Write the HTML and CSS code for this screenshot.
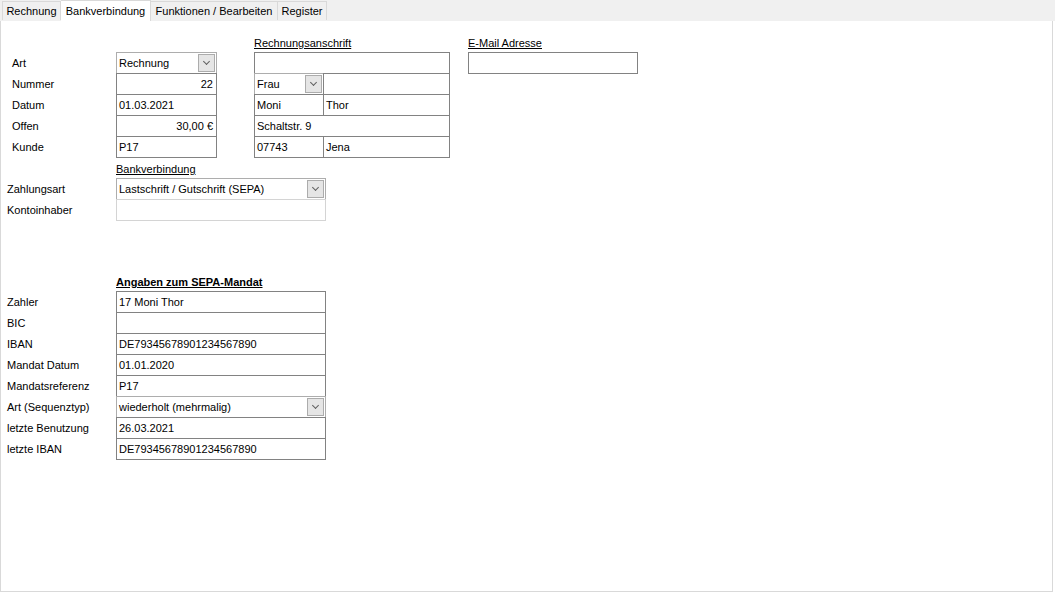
FILE: index.html
```html
<!DOCTYPE html>
<html lang="de">
<head>
<meta charset="UTF-8">
<title>Bankverbindung</title>
<link rel="stylesheet" href="styles.css">
</head>
<body>

<div class="tabs">
    <div class="tab t-invoice">Rechnung</div>
    <div class="tab active t-bank">Bankverbindung</div>
    <div class="tab t-func">Funktionen / Bearbeiten</div>
    <div class="tab t-reg">Register</div>
</div>

<div class="panel">
    <div class="top">
        <div class="col-main">
            <div class="head"></div>
            <div class="row"><span class="label indent">Art</span><div class="field select w-main">Rechnung<span class="drop"></span></div></div>
            <div class="row"><span class="label indent">Nummer</span><div class="field w-main right">22</div></div>
            <div class="row"><span class="label indent">Datum</span><div class="field w-main">01.03.2021</div></div>
            <div class="row"><span class="label indent">Offen</span><div class="field w-main right">30,00 €</div></div>
            <div class="row"><span class="label indent">Kunde</span><div class="field w-main">P17</div></div>
        </div>
        <div class="col-address">
            <div class="head"><span class="heading">Rechnungsanschrift</span></div>
            <div class="row"><div class="field w-addr"></div></div>
            <div class="row"><div class="field select w-salut">Frau<span class="drop"></span></div><div class="field w-rest"></div></div>
            <div class="row"><div class="field w-salut">Moni</div><div class="field w-rest">Thor</div></div>
            <div class="row"><div class="field w-addr">Schaltstr. 9</div></div>
            <div class="row"><div class="field w-salut">07743</div><div class="field w-rest">Jena</div></div>
        </div>
        <div class="col-mail">
            <div class="head"><span class="heading">E-Mail Adresse</span></div>
            <div class="row"><div class="field w-mail"></div></div>
        </div>
    </div>

    <div class="section">
        <div class="row head-row"><span class="label"></span><span class="heading">Bankverbindung</span></div>
        <div class="row"><span class="label">Zahlungsart</span><div class="field select w-wide">Lastschrift / Gutschrift (SEPA)<span class="drop"></span></div></div>
        <div class="row"><span class="label">Kontoinhaber</span><div class="field disabled w-wide"></div></div>
    </div>

    <div class="section sepa">
        <div class="row head-row"><span class="label"></span><span class="heading bold">Angaben zum SEPA-Mandat</span></div>
        <div class="row"><span class="label">Zahler</span><div class="field w-wide">17 Moni Thor</div></div>
        <div class="row"><span class="label">BIC</span><div class="field w-wide"></div></div>
        <div class="row"><span class="label">IBAN</span><div class="field w-wide">DE79345678901234567890</div></div>
        <div class="row"><span class="label">Mandat Datum</span><div class="field w-wide">01.01.2020</div></div>
        <div class="row"><span class="label">Mandatsreferenz</span><div class="field w-wide">P17</div></div>
        <div class="row"><span class="label">Art (Sequenztyp)</span><div class="field select w-wide">wiederholt (mehrmalig)<span class="drop"></span></div></div>
        <div class="row"><span class="label">letzte Benutzung</span><div class="field w-wide">26.03.2021</div></div>
        <div class="row"><span class="label">letzte IBAN</span><div class="field w-wide">DE79345678901234567890</div></div>
    </div>
</div>

</body>
</html>
```

FILE: styles.css
```css
* {
    box-sizing: border-box;
}

body {
    margin: 0;
    padding: 0;
    font-family: "Liberation Sans", Arial, sans-serif;
    font-size: 11px;
    color: #000;
    background-color: #fff;
}

.tabs {
    display: flex;
    align-items: flex-end;
    height: 21px;
    padding-left: 2px;
    background-color: #f0f0f0;
    position: relative;
    z-index: 1;
}

.tab {
    height: 19px;
    line-height: 19px;
    margin-bottom: 1px;
    border: 1px solid #d9d9d9;
    border-bottom: none;
    border-left: none;
    background-color: #f0f0f0;
    text-align: center;
    white-space: nowrap;
}

.tab:first-child {
    border-left: 1px solid #d9d9d9;
}

.tab.active {
    height: 21px;
    line-height: 20px;
    margin-bottom: 0;
    background-color: #fff;
}

.t-invoice { width: 59px; }
.t-bank { width: 90px; }
.t-func { width: 127px; }
.t-reg { width: 49px; }

.panel {
    width: 1053px;
    height: 572px;
    margin-top: -1px;
    border: 1px solid #d9d9d9;
    background-color: #fff;
}

.top {
    display: flex;
}

.head {
    height: 31px;
    display: flex;
    align-items: flex-end;
    padding-bottom: 2px;
    line-height: 13px;
}

.heading {
    text-decoration: underline;
    line-height: 13px;
}

.heading.bold {
    font-weight: bold;
}

.col-address {
    margin-left: 37px;
}

.col-mail {
    margin-left: 18px;
}

.row {
    display: flex;
    height: 21px;
}

.head-row {
    align-items: flex-end;
    padding-bottom: 2px;
}

.label {
    width: 115px;
    flex-shrink: 0;
    padding-left: 6px;
    line-height: 22px;
    white-space: nowrap;
}

.label.indent {
    padding-left: 11px;
}

.field {
    position: relative;
    height: 22px;
    line-height: 20px;
    padding: 0 3px 0 2px;
    border: 1px solid #828282;
    background-color: #fff;
    white-space: nowrap;
    flex-shrink: 0;
}

.field + .field {
    margin-left: -1px;
}

.field.right {
    text-align: right;
}

.field.select {
    border-color: #adadad;
}

.field.disabled {
    border-color: #d4d4d4;
}

.drop {
    position: absolute;
    right: 1px;
    top: 1px;
    width: 17px;
    height: 18px;
    border: 1px solid #acacac;
    background-color: #e5e5e5;
}

.drop::after {
    content: "";
    position: absolute;
    left: 5px;
    top: 4px;
    width: 4px;
    height: 4px;
    border-right: 1px solid #606060;
    border-bottom: 1px solid #606060;
    transform: rotate(45deg);
}

.w-main { width: 101px; }
.w-addr { width: 196px; }
.w-salut { width: 70px; }
.w-rest { width: 127px; }
.w-mail { width: 170px; }
.w-wide { width: 210px; }

.section {
    display: flex;
    flex-direction: column;
}

.sepa {
    margin-top: 50px;
}
```
